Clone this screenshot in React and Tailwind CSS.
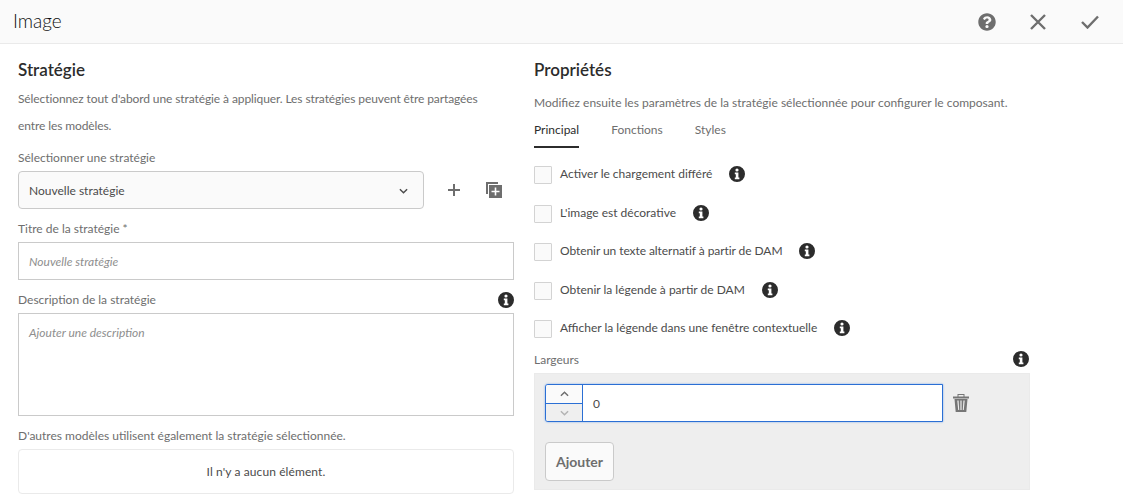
import React from 'react';
import { FaQuestionCircle } from 'react-icons/fa';

const Info = ({ className = '' }) => (
  <svg viewBox="0 0 16 16" className={`w-[16px] h-[16px] text-[#2c2c2c] shrink-0 ${className}`} fill="currentColor">
    <path fillRule="evenodd" d="M8 0a8 8 0 1 1 0 16A8 8 0 0 1 8 0zM8 2.400a1.600 1.600 0 1 0 0 3.200 1.600 1.600 0 0 0 0-3.200zM5.800 6.600v1.600h1v3.400h-1v1.600h4.600v-1.600h-1V6.600z" />
  </svg>
);

const Label = ({ children }) => <div className="h-[13px] pb-[2px] flex items-center text-[12px] text-[#6e6e6e]">{children}</div>;

const CheckRow = ({ label, tight }) => (
  <div className="h-[18px] flex items-center">
    <div className="mt-[2px] w-[18px] h-[18px] border border-[#d3d3d3] bg-[#fafafa] rounded-[1px] shrink-0" />
    <span className={`ml-[8px] text-[12px] text-[#4b4b4b] ${tight ? 'tracking-[-0.07px]' : ''}`}>{label}</span>
    <Info className="ml-[17px]" />
  </div>
);

const Chevron = ({ up, className = '' }) => (
  <svg viewBox="0 0 10 6" className={`w-[9px] h-[6px] ${className}`} fill="none" stroke="currentColor" strokeWidth="1.6">
    <path d={up ? 'M1 5l4-4 4 4' : 'M1 1l4 4 4-4'} />
  </svg>
);

export default function App() {
  return (
    <div className="w-[1123px] h-[501px] overflow-hidden bg-white font-['Lato','Noto_Sans',sans-serif]">
      <header className="h-[44px] bg-[#fafafa] border-b border-[#eaeaea] flex items-center pl-[13px] pr-[24px]">
        <h1 className="text-[19px] font-light text-[#111111] flex-1">Image</h1>
        <div className="flex items-center text-[#6e6e6e]">
          <FaQuestionCircle className="w-[18px] h-[18px]" />
          <svg viewBox="0 0 16 16" className="w-[16px] h-[16px] ml-[34px]" fill="none" stroke="currentColor" strokeWidth="2.4"><path d="M1 1l14 14M15 1L1 15" /></svg>
          <svg viewBox="0 0 18 14" className="w-[18px] h-[14px] ml-[35px]" fill="none" stroke="currentColor" strokeWidth="2.4"><path d="M1 7l5.500 5.500L17 1.500" /></svg>
        </div>
      </header>

      <main className="flex gap-[20px] pl-[18px]">
        <section className="w-[496px] pt-[15px]">
          <h2 className="h-[22px] flex items-center text-[17px] font-semibold text-[#2c2c2c]">Stratégie</h2>
          <p className="mt-[4px] text-[12px] leading-[27px] tracking-[-0.1px] text-[#6e6e6e]">
            Sélectionnez tout d'abord une stratégie à appliquer. Les stratégies peuvent être partagées<br />entre les modèles.
          </p>
          <div className="mt-[13px]"><Label>Sélectionner une stratégie</Label></div>
          <div className="mt-[6px] flex items-center">
            <div className="w-[406px] h-[38px] bg-[#fafafa] border border-[#cacaca] rounded-[4px] flex items-center justify-between pl-[10px] pr-[15px] pt-[2px] text-[12px] text-[#4b4b4b]">
              Nouvelle stratégie
              <Chevron className="text-[#4b4b4b]" />
            </div>
            <svg viewBox="0 0 14 14" className="w-[14px] h-[14px] ml-[23px] text-[#6e6e6e]" fill="none" stroke="currentColor" strokeWidth="2"><path d="M7 1v12M1 7h12" /></svg>
            <svg viewBox="0 0 16 16" className="w-[16px] h-[16px] ml-[25px] text-[#6e6e6e]" fill="currentColor">
              <path d="M0 0h12v2H2v10H0z" />
              <path fillRule="evenodd" d="M3 3h13v13H3zM8.700 5.500v3.200H5.500v1.600h3.200v3.200h1.600v-3.200h3.200V8.700h-3.200V5.500z" />
            </svg>
          </div>
          <div className="mt-[14px]"><Label>Titre de la stratégie *</Label></div>
          <div className="mt-[6px] h-[38px] border border-[#cacaca] flex items-center pl-[10px] pt-[2px] text-[12px] italic text-[#8e8e8e]">Nouvelle stratégie</div>
          <div className="mt-[14px] h-[13px] flex items-center justify-between">
            <Label>Description de la stratégie</Label>
            <Info className="-translate-y-[1px]" />
          </div>
          <div className="mt-[6px] h-[103px] border border-[#cacaca] pl-[10px] pt-[10px] text-[12px] italic text-[#8e8e8e]">Ajouter une description</div>
          <div className="mt-[14px]"><Label>D'autres modèles utilisent également la stratégie sélectionnée.</Label></div>
          <div className="mt-[6px] h-[45px] border border-[#eaeaea] rounded-[4px] flex items-center justify-center text-[12px] tracking-[0.1px] text-[#4b4b4b]">Il n'y a aucun élément.</div>
        </section>

        <section className="w-[496px] pt-[15px]">
          <h2 className="h-[22px] flex items-center text-[17px] font-semibold text-[#2c2c2c]">Propriétés</h2>
          <p className="mt-[13px] h-[18px] flex items-center text-[12px] text-[#6e6e6e]">Modifiez ensuite les paramètres de la stratégie sélectionnée pour configurer le composant.</p>
          <nav className="mt-[5px] h-[31px] flex gap-[32px] text-[12px] text-[#6e6e6e]">
            <span className="h-[31px] pt-[4px] border-b-2 border-[#2c2c2c] text-[#2c2c2c]">Principal</span>
            <span className="pt-[4px]">Fonctions</span>
            <span className="pt-[4px]">Styles</span>
          </nav>
          <div className="mt-[17px] flex flex-col gap-[20.5px]">
            <CheckRow label="Activer le chargement différé" />
            <CheckRow label="L'image est décorative" />
            <CheckRow tight label="Obtenir un texte alternatif à partir de DAM" />
            <CheckRow label="Obtenir la légende à partir de DAM" />
            <CheckRow label="Afficher la légende dans une fenêtre contextuelle" />
          </div>
          <div className="mt-[16px] h-[13px] flex items-center justify-between text-[12px] text-[#6e6e6e]">
            Largeurs
            <Info className="mr-[1px] -translate-y-[1px]" />
          </div>
          <div className="mt-[7px] h-[117px] bg-[#eeeeee] border border-[#eaeaea] pl-[10px] pt-[10px]">
            <div className="flex items-center">
              <div className="w-[398px] h-[38px] flex border border-[#2b6fd4] rounded-l-[3px] bg-white shadow-[0_0_2px_#6ea3ea] overflow-hidden">
                <div className="w-[37px] flex flex-col border-r border-[#2b6fd4]">
                  <div className="h-[19px] bg-[#fafafa] border-b border-[#2b6fd4] flex items-center justify-center"><Chevron up className="text-[#6e6e6e]" /></div>
                  <div className="flex-1 bg-[#efefef] flex items-center justify-center"><Chevron className="text-[#b3b3b3]" /></div>
                </div>
                <div className="flex items-center pl-[10px] pt-[2px] text-[12px] text-[#4b4b4b]">0</div>
              </div>
              <svg viewBox="0 0 16 18" className="ml-[10px] w-[16px] h-[18px] text-[#767676]" fill="currentColor">
                <path fillRule="evenodd" d="M4.500 0h7v2.500H16v2H0v-2h4.500zM5.500 1v1.500h5V1z" />
                <path fillRule="evenodd" d="M1.500 5h13l-1.200 13H2.700zM4.300 6.500l.9 9.500h1L5.600 6.500zM7.400 6.500V16h1.200V6.500zM10.400 6.500l-.6 9.500h1l.9-9.500z" />
              </svg>
            </div>
            <button className="mt-[20px] w-[69px] h-[39px] bg-[#fafafa] border border-[#cacaca] rounded-[4px] text-[14px] font-bold text-[#6e6e6e]">Ajouter</button>
          </div>
        </section>
      </main>
    </div>
  );
}
